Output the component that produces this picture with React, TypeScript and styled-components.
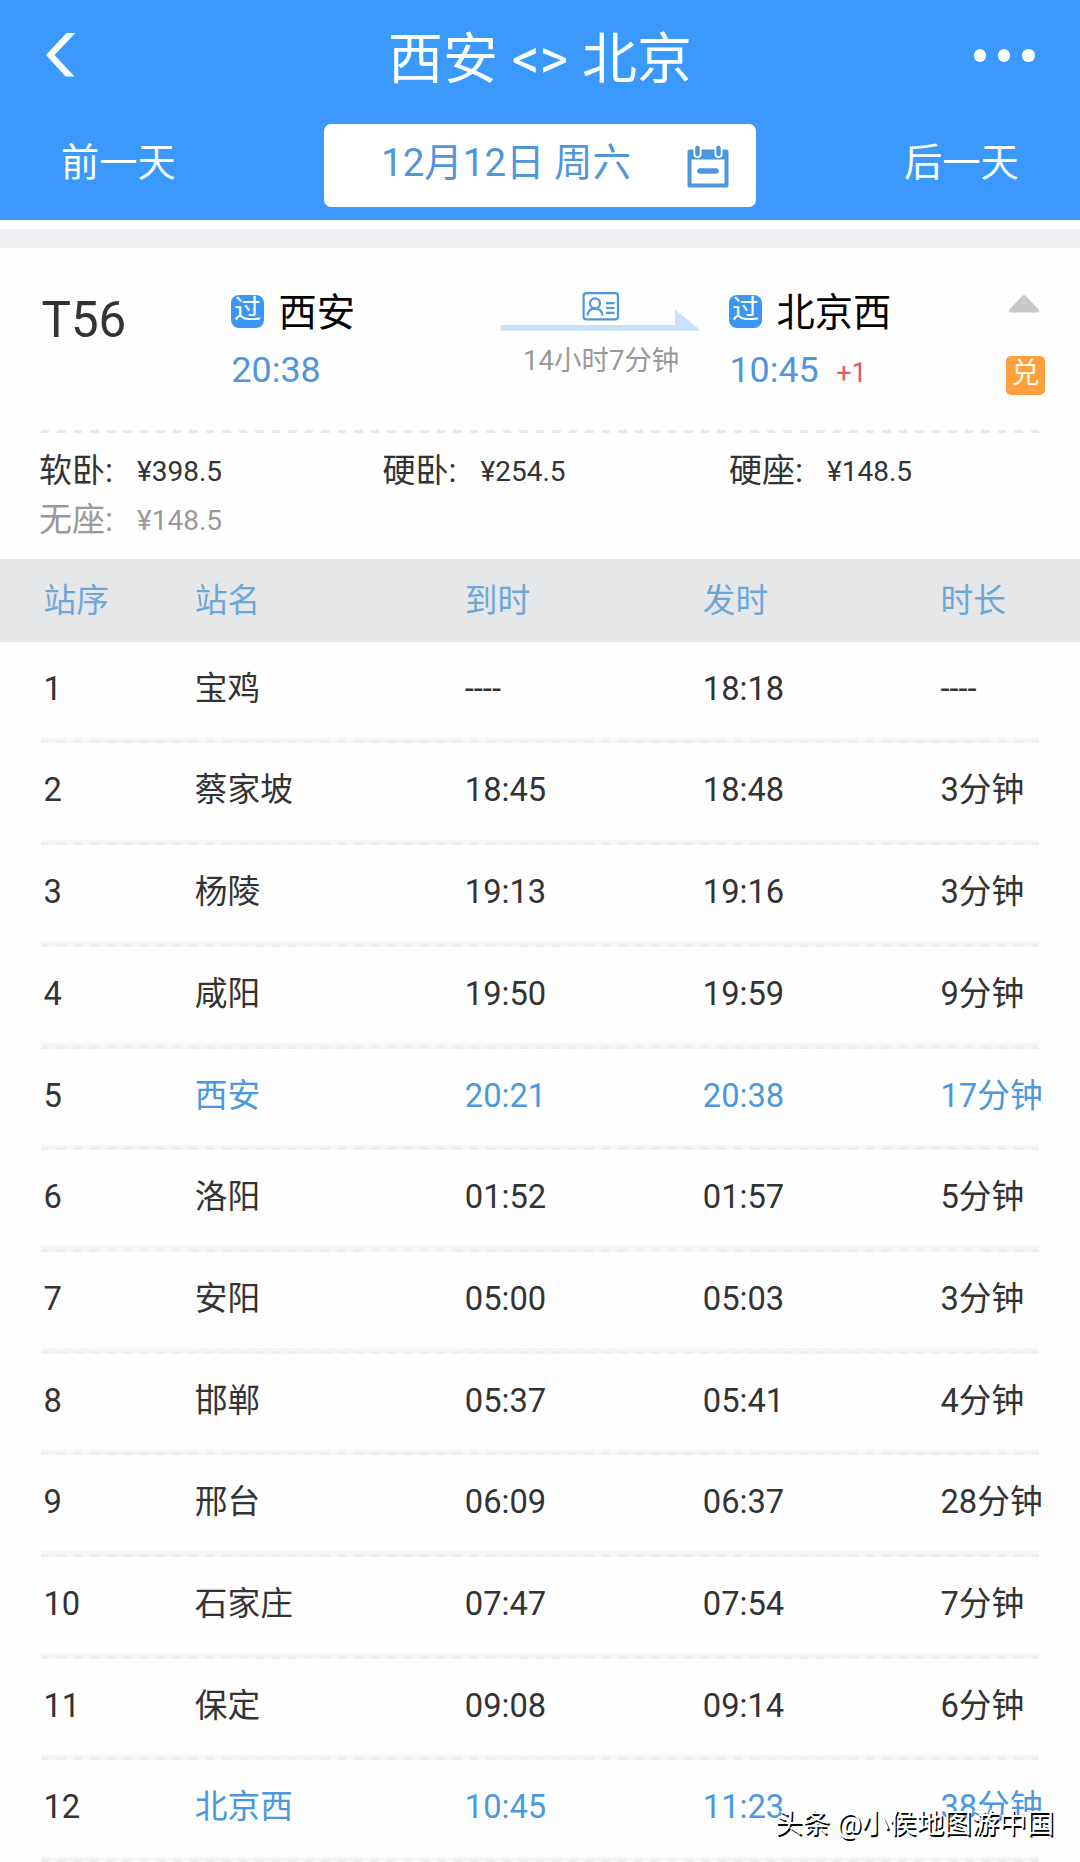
import React from "react";
import styled, { createGlobalStyle } from "styled-components";

const GlobalStyle = createGlobalStyle`
  *, *::before, *::after { box-sizing: border-box; }
  body {
    margin: 0;
    background: #fefefe;
    font-family: Roboto, "Noto Sans CJK SC", sans-serif;
    color: #333;
  }
`;

const Page = styled.div`
  position: relative;
  width: 1080px;
  height: 1862px;
  overflow: hidden;
  display: flex;
  flex-direction: column;
  background: #fefefe;
`;

const Header = styled.header`
  flex: none;
  height: 220px;
  background: #3b99fc;
  color: #f9ffff;
`;

const TitleBar = styled.div`
  height: 118px;
  display: grid;
  grid-template-columns: 200px 1fr 200px;
  align-items: center;
`;

const BackButton = styled.div`
  padding: 0 0 8px 45px;
  line-height: 0;
`;

const MoreButton = styled.div`
  display: flex;
  justify-content: flex-end;
  gap: 12px;
  padding: 0 45.5px 7px 0;
`;

const Dot = styled.span`
  width: 12.2px;
  height: 12.2px;
  border-radius: 50%;
  background: #f9ffff;
`;

const Title = styled.h1`
  margin: 0;
  text-align: center;
  font-size: 55px;
  font-weight: 400;
  line-height: 78px;
  white-space: pre;
`;

const DateBar = styled.div`
  display: flex;
  justify-content: space-between;
  align-items: flex-start;
  padding: 6px 61px 0 61px;
`;

const DayLink = styled.div`
  width: 115px;
  font-size: 38.3px;
  line-height: 78px;
  white-space: nowrap;
`;

const DateBox = styled.div`
  width: 432px;
  height: 82.5px;
  border-radius: 7px;
  background: #fff;
  display: flex;
  justify-content: space-between;
  align-items: flex-start;
  padding: 0 27.5px 0 57px;
`;

const DateText = styled.span`
  font-size: 38.5px;
  line-height: 78px;
  color: #5196d8;
  white-space: pre;
`;

const CalendarIcon = styled.svg`
  margin-top: 21px;
`;

const Gap = styled.div`
  flex: none;
  height: 19px;
  margin-top: 9px;
  background: #eeeef3;
`;

const Trip = styled.section`
  flex: none;
  height: 182px;
  padding: 42px 0 0 41px;
  display: grid;
  grid-template-columns: 190px 269px 229px 277px 39px;
  align-items: start;
`;

const TrainNo = styled.div`
  padding-left: 0.5px;
  font-size: 49.3px;
  line-height: 60px;
  color: #333;
`;

const StationLine = styled.div`
  display: flex;
  align-items: center;
  height: 43px;
  gap: 14.5px;
`;

const PassBadge = styled.span`
  width: 33px;
  height: 33px;
  border-radius: 8px;
  background: #3c95f0;
  color: #f9ffff;
  font-size: 27px;
  line-height: 30px;
  text-align: center;
`;

const StationName = styled.span`
  font-size: 38.3px;
  line-height: 40px;
  padding-top: 2px;
  color: #000;
`;

const TimeLine = styled.div`
  display: flex;
  align-items: baseline;
  gap: 17.5px;
  margin-top: 15px;
  padding-left: 0.5px;
  font-size: 35.8px;
  line-height: 44px;
  color: #5096da;
`;

const NextDay = styled.span`
  font-size: 27px;
  color: #e05c62;
`;

const Route = styled.div`
  display: flex;
  flex-direction: column;
`;

const Duration = styled.div`
  margin-top: 9px;
  padding-left: 23px;
  font-size: 27.5px;
  line-height: 40px;
  color: #999;
`;

const Side = styled.div`
  display: flex;
  flex-direction: column;
  align-items: center;
  padding-top: 5px;
`;

const Triangle = styled.svg`
  margin-right: 3px;
`;

const ExchangeBadge = styled.span`
  margin-top: 43px;
  width: 39px;
  height: 39px;
  border-radius: 5px;
  background: #ff9f3e;
  color: #fffbe8;
  font-size: 28px;
  line-height: 35px;
  text-align: center;
`;

const DashLine = styled.div`
  flex: none;
  width: 998px;
  height: 3px;
  margin-left: 41px;
  background: repeating-linear-gradient(90deg, #e9e9e9 0 8.5px, transparent 8.5px 16.5px);
`;

const Prices = styled.section`
  flex: none;
  height: 126px;
  padding: 12px 0 0 39px;
  display: grid;
  grid-template-columns: 343.5px 346.5px 1fr;
  grid-auto-rows: 49px;
`;

const Price = styled.div<{ $soldOut?: boolean }>`
  display: grid;
  grid-template-columns: 98px auto;
  align-items: start;
  font-size: 28px;
  line-height: 53.4px;
  color: ${(p) => (p.$soldOut ? "#999" : "#333")};
`;

const Seat = styled.span`
  font-size: 33px;
  line-height: 52px;
`;

const Row = styled.div`
  display: grid;
  grid-template-columns: 151.3px 270px 238px 237.7px 1fr;
  padding-left: 43.5px;
  font-size: 32.7px;
  white-space: nowrap;
`;

const TableHead = styled(Row)`
  flex: none;
  height: 82.8px;
  line-height: 82.4px;
  background: #e5e7e9;
  border-top: 1px solid #e2e2e2;
  color: #6ea7d6;
`;

const StopRow = styled(Row)`
  height: 96.2px;
  line-height: 94px;
`;

const Cell = styled.span<{ $active?: boolean }>`
  color: ${(p) => (p.$active ? "#4a98df" : "#333")};
`;

const Separator = styled.div`
  width: 998px;
  height: 5.5px;
  margin-left: 41px;
  background:
    repeating-linear-gradient(90deg, #eeeeee 0 8.5px, transparent 8.5px 16.5px) 0 100% / 100% 3px no-repeat,
    #f6f6f6;
`;

const Watermark = styled.div`
  position: absolute;
  left: 775px;
  top: 1806px;
  font-size: 27.5px;
  line-height: 36px;
  color: #fff;
  text-shadow: 1.5px 1.5px 0 #000;
  white-space: pre;
`;

const stops: [string, string, string, string][] = [
  ["宝鸡", "----", "18:18", "----"],
  ["蔡家坡", "18:45", "18:48", "3分钟"],
  ["杨陵", "19:13", "19:16", "3分钟"],
  ["咸阳", "19:50", "19:59", "9分钟"],
  ["西安", "20:21", "20:38", "17分钟"],
  ["洛阳", "01:52", "01:57", "5分钟"],
  ["安阳", "05:00", "05:03", "3分钟"],
  ["邯郸", "05:37", "05:41", "4分钟"],
  ["邢台", "06:09", "06:37", "28分钟"],
  ["石家庄", "07:47", "07:54", "7分钟"],
  ["保定", "09:08", "09:14", "6分钟"],
  ["北京西", "10:45", "11:23", "38分钟"],
];

const prices = [
  { seat: "软卧:", price: "¥398.5" },
  { seat: "硬卧:", price: "¥254.5" },
  { seat: "硬座:", price: "¥148.5" },
  { seat: "无座:", price: "¥148.5", soldOut: true },
];

const highlighted = ["西安", "北京西"];

function RouteArrow() {
  return (
    <svg width="202" height="42" viewBox="0 0 202 42">
      <path d="M0.5 35H175V19.5L201 40.8H0.5Z" fill="#c9e1fb" />
      <g fill="none" stroke="#4d97de" strokeWidth="2.2">
        <rect x="83.6" y="3.2" width="34.4" height="26.2" rx="3" />
        <circle cx="95" cy="13.3" r="5" />
        <path d="M87.5 25.5C88 20.8 91 18.6 95 18.6S102 20.8 102.5 25.5" />
        <path d="M106 13.2H114.5M106 18H114.5M106 22.8H114.5" />
      </g>
    </svg>
  );
}

export default function App() {
  return (
    <Page>
      <GlobalStyle />
      <Header>
        <TitleBar>
          <BackButton>
            <svg width="31" height="44" viewBox="0 0 31 44">
              <path d="M21.5 0H30.5L9.5 22L29.5 43.5H20.5L1 22Z" fill="#f9ffff" />
            </svg>
          </BackButton>
          <Title>西安 &lt;&gt; 北京</Title>
          <MoreButton>
            <Dot />
            <Dot />
            <Dot />
          </MoreButton>
        </TitleBar>
        <DateBar>
          <DayLink>前一天</DayLink>
          <DateBox>
            <DateText>12月12日 周六</DateText>
            <CalendarIcon width="42" height="43" viewBox="0 0 42 43">
              <path
                fill="#5196dc"
                fillRule="evenodd"
                d="M3 4.5H39Q41.5 4.5 41.5 7V40Q41.5 42.5 39 42.5H3Q0.5 42.5 0.5 40V7Q0.5 4.5 3 4.5ZM4.5 14.5V38.5H37.5V14.5Z"
              />
              <path d="M10.5 4V9M31.5 4V9" stroke="#fff" strokeWidth="8" strokeLinecap="round" />
              <path d="M10.5 3V9M31.5 3V9" stroke="#5196dc" strokeWidth="4.5" strokeLinecap="round" />
              <path d="M13 26H29" stroke="#5196dc" strokeWidth="5.5" strokeLinecap="round" />
            </CalendarIcon>
          </DateBox>
          <DayLink>后一天</DayLink>
        </DateBar>
      </Header>
      <Gap />
      <Trip>
        <TrainNo>T56</TrainNo>
        <div>
          <StationLine>
            <PassBadge>过</PassBadge>
            <StationName>西安</StationName>
          </StationLine>
          <TimeLine>20:38</TimeLine>
        </div>
        <Route>
          <RouteArrow />
          <Duration>14小时7分钟</Duration>
        </Route>
        <div>
          <StationLine>
            <PassBadge>过</PassBadge>
            <StationName>北京西</StationName>
          </StationLine>
          <TimeLine>
            10:45<NextDay>+1</NextDay>
          </TimeLine>
        </div>
        <Side>
          <Triangle width="32" height="18" viewBox="0 0 32 18">
            <path d="M13.5 1.5Q16 -1 18.5 1.5L30.5 14.5Q32 17.5 29 17.5H3Q0 17.5 1.5 14.5Z" fill="#c8c8c8" />
          </Triangle>
          <ExchangeBadge>兑</ExchangeBadge>
        </Side>
      </Trip>
      <DashLine />
      <Prices>
        {prices.map((p) => (
          <Price key={p.seat} $soldOut={p.soldOut}>
            <Seat>{p.seat}</Seat>
            <span>{p.price}</span>
          </Price>
        ))}
      </Prices>
      <TableHead>
        <span>站序</span>
        <span>站名</span>
        <span>到时</span>
        <span>发时</span>
        <span>时长</span>
      </TableHead>
      <div>
        {stops.map(([name, arrive, depart, stay], i) => {
          const active = highlighted.includes(name);
          return (
            <React.Fragment key={name}>
              <StopRow>
                <Cell>{i + 1}</Cell>
                <Cell $active={active}>{name}</Cell>
                <Cell $active={active}>{arrive}</Cell>
                <Cell $active={active}>{depart}</Cell>
                <Cell $active={active}>{stay}</Cell>
              </StopRow>
              <Separator />
            </React.Fragment>
          );
        })}
      </div>
      <Watermark>头条 @小侯地图游中国</Watermark>
    </Page>
  );
}
